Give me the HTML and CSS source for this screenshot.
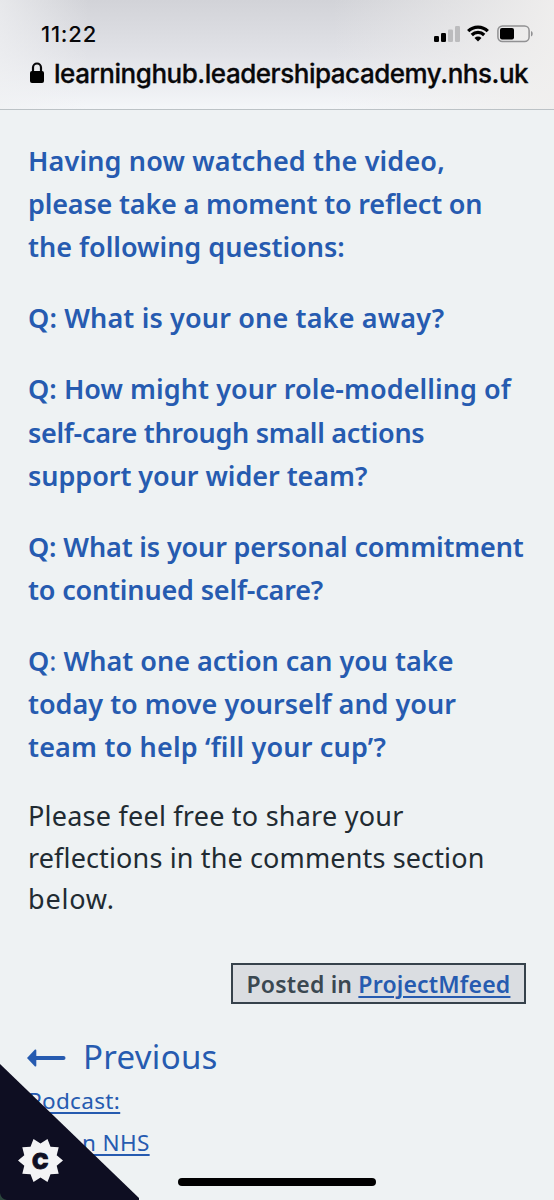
FILE: index.html
```
<!DOCTYPE html>
<html lang="en">
<head>
    <meta charset="UTF-8">
    <meta name="viewport" content="width=device-width, initial-scale=1.0">
    <title>Learning Hub</title>
    <link rel="stylesheet" href="styles.css">
</head>
<body>
    <header class="browser-bar">
        <div class="status">
            <span class="time">11:22</span>
            <div class="status-icons">
                <svg class="signal" width="26" height="16" viewBox="0 0 26 16">
                    <rect x="0" y="10" width="5" height="6" rx="1.3"/>
                    <rect x="7" y="7" width="5" height="9" rx="1.3"/>
                    <rect class="off" x="14" y="3.500" width="5" height="12.500" rx="1.3"/>
                    <rect class="off" x="21" y="0" width="5" height="16" rx="1.3"/>
                </svg>
                <svg class="wifi" width="22" height="17" viewBox="0 0 22 17">
                    <path d="M1.200 6.200a13.800 13.800 0 0 1 19.600 0M4.800 10a8.800 8.800 0 0 1 12.400 0"/>
                    <path class="dot" d="M7.500 13a5 5 0 0 1 7 0L11 16.600z"/>
                </svg>
                <svg class="battery" width="37" height="18" viewBox="0 0 37 18">
                    <rect class="shell" x="0.900" y="0.900" width="31.200" height="15.700" rx="4.500"/>
                    <rect x="3" y="3" width="14" height="11.500" rx="2"/>
                    <path class="cap" d="M34 6v5.500c2.300-.8 2.300-4.700 0-5.500z"/>
                </svg>
            </div>
        </div>
        <div class="address">
            <svg class="lock" width="14" height="21" viewBox="0 0 14 21">
                <path d="M3 10V5.500a4 4 0 0 1 8 0V10"/>
                <rect x="0" y="9" width="14" height="12" rx="2"/>
            </svg>
            <span class="url">learninghub.leadershipacademy.nhs.uk</span>
        </div>
    </header>

    <main class="content">
        <div class="questions">
            <p><span class="l1">Having now watched the video,</span><br><span class="l2">please take a moment to reflect on</span><br><span class="l3">the following questions:</span></p>
            <p><span class="l4">Q: What is your one take away?</span></p>
            <p><span class="l5">Q: How might your role-modelling of</span><br><span class="l6">self-care through small actions</span><br><span class="l7">support your wider team?</span></p>
            <p><span class="l8">Q: What is your personal commitment</span><br><span class="l9">to continued self-care?</span></p>
            <p><span class="l10">Q<span class="thin">:</span> What one action can you take</span><br><span class="l11">today to move yourself and your</span><br><span class="l12">team to help ‘fill your cup’?</span></p>
        </div>
        <p class="share"><span class="s1">Please feel free to share your</span><br><span class="s2">reflections in the comments section</span><br><span class="s3">below.</span></p>

        <div class="posted">Posted in <a href="#">ProjectMfeed</a></div>

        <nav class="previous">
            <div class="previous-title">
                <svg class="arrow" width="39" height="18" viewBox="0 0 39 18">
                    <path class="line" d="M7 9H36.500"/>
                    <path d="M0 9L8 .6Q9.300 0 9.300 1.500V16.500Q9.300 18 8 17.400z"/>
                </svg>
                <span>Previous</span>
            </div>
            <a class="podcast" href="#">Podcast:</a>
            <a class="nhs" href="#">n NHS</a>
        </nav>
    </main>

    <!-- Cookie settings -->
    <div class="cookie-corner">
        <svg width="139" height="136" viewBox="0 0 139 136">
            <path class="corner" d="M0 0L139 134V136H0z"/>
            <path class="corner-edge" d="M0 129Q1 135 7 136H0z"/>
            <polygon class="badge" points="63,96.500 56.700,101.800 58.700,109.700 50.500,110.300 47.500,117.900 40.500,113.500 33.500,117.900 30.500,110.300 22.300,109.700 24.300,101.800 18,96.500 24.300,91.200 22.300,83.300 30.500,82.700 33.500,75.100 40.500,79.500 47.500,75.100 50.500,82.700 58.700,83.300 56.700,91.200"/>
            <text x="40.200" y="105">C</text>
        </svg>
    </div>
    <div class="home-bar"></div>
</body>
</html>
```

FILE: styles.css
```
body {
    margin: 0;
    width: 554px;
    height: 1200px;
    position: relative;
    overflow: hidden;
    background-color: #eef2f3;
    font-family: "Noto Sans", "Open Sans", sans-serif;
    color: #212b32;
}

/* Browser header */
.browser-bar {
    box-sizing: border-box;
    height: 110px;
    border-bottom: 1px solid #bcc2c6;
    background: linear-gradient(to right, rgba(240, 241, 243, .7), rgba(240, 241, 243, 0) 16%, rgba(240, 240, 240, 0) 60%, rgba(240, 239, 238, .95)), linear-gradient(#d2d3d8, #e1e2e7 50%, #f4f6f9);
    color: #08080a;
    font-family: Inter, sans-serif;
}
.status {
    display: flex;
    justify-content: space-between;
    padding: 22px 20px 0 41px;
    height: 24px;
}
.time {
    font-size: 22px;
    line-height: 24px;
    font-weight: 500;
    letter-spacing: .8px;
}
.status-icons {
    display: flex;
    padding-top: 3px;
}
.signal {
    margin: 1px 7px 0 0;
}
.off {
    fill: #bcbcbe;
}
.wifi {
    margin-right: 8px;
}
.wifi path {
    fill: none;
    stroke: #000;
    stroke-width: 3.2;
}
.wifi .dot {
    fill: #000;
    stroke: none;
}
.battery .shell {
    fill: none;
    stroke: #919193;
    stroke-width: 1.5;
}
.cap {
    fill: #919193;
}
.address {
    display: flex;
    padding: 12px 0 0 30px;
}
.lock {
    margin: 4px 10px 0 0;
}
.lock path {
    fill: none;
    stroke: #08080a;
    stroke-width: 2.2;
}
.url {
    font-size: 26px;
    line-height: 32px;
    font-weight: 500;
    letter-spacing: -.47px;
    white-space: nowrap;
    -webkit-text-stroke: .3px #08080a;
}

/* Article */
.content {
    padding: 29px 28px 0;
    display: flex;
    flex-direction: column;
    white-space: nowrap;
}
.questions p {
    margin: 0 0 27.8px;
    font-size: 27px;
    line-height: 43.2px;
    font-weight: 600;
    color: #265bb0;
}
.l1, .l4 { letter-spacing: .15px; }
.l2 { letter-spacing: -.18px; }
.l5 { letter-spacing: .06px; }
.l6 { letter-spacing: -.3px; }
.l7 { letter-spacing: -.05px; }
.l8 { letter-spacing: -.14px; }
.l9 { letter-spacing: -.17px; }
.l12 { letter-spacing: .18px; }
.s1 { letter-spacing: .23px; }
.s2 { letter-spacing: .14px; }
.s3 { letter-spacing: .8px; }
.thin {
    font-weight: 400;
}
.share {
    margin: -1px 0 0;
    font-size: 27px;
    line-height: 41.5px;
}
.posted {
    align-self: flex-end;
    box-sizing: border-box;
    width: 295px;
    height: 41px;
    margin-top: 43px;
    border: 2px solid #36424b;
    background-color: #dadde1;
    color: #3b4851;
    font-size: 23px;
    line-height: 38px;
    font-weight: 600;
    letter-spacing: .18px;
    text-align: center;
}
a {
    color: #265bb0;
    text-underline-offset: 3px;
    text-decoration-thickness: 1.5px;
}
.previous {
    display: flex;
    flex-direction: column;
    align-items: flex-start;
    margin-top: 30px;
    color: #265bb0;
}
.previous-title {
    display: flex;
    align-items: center;
    font-size: 33px;
    line-height: 46px;
    letter-spacing: .3px;
}
.arrow {
    margin: 3px 17px 0 -1px;
    fill: #265bb0;
}
.arrow .line {
    stroke: #265bb0;
    stroke-width: 4;
    stroke-linecap: round;
}
.previous a {
    font-size: 22.5px;
    line-height: 42px;
    letter-spacing: .35px;
}
.nhs {
    padding-left: 54px;
}

/* Fixed overlays */
.cookie-corner {
    position: absolute;
    left: 0;
    bottom: 0;
    height: 136px;
}
.corner {
    fill: #0e0e22;
}
.corner-edge {
    fill: #2b463d;
}
.badge {
    fill: #f3f3f5;
}
.cookie-corner text {
    fill: #0e0e22;
    stroke: #0e0e22;
    stroke-width: .8px;
    font: 900 22px Inter, sans-serif;
    text-anchor: middle;
}
.home-bar {
    position: absolute;
    left: 178px;
    bottom: 14px;
    width: 198px;
    height: 8px;
    border-radius: 4px;
    background-color: #000;
}
```
